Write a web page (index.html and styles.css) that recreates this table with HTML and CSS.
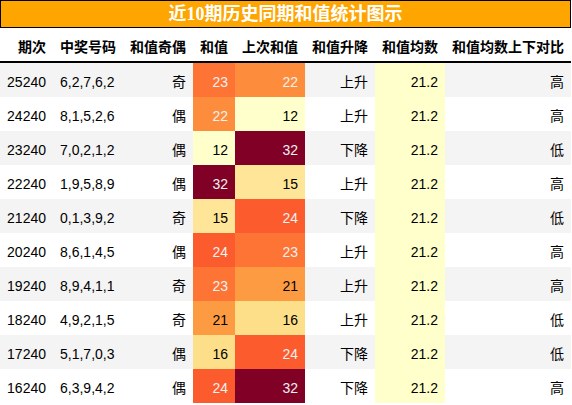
FILE: index.html
```html
<!DOCTYPE html>
<html lang="zh-CN">
<head>
<meta charset="utf-8">
<title>近10期历史同期和值统计图示</title>
<link rel="stylesheet" href="styles.css">
</head>
<body>
<div class="chart">
  <div class="title">近10期历史同期和值统计图示</div>
  <table class="stats">
    <colgroup>
      <col class="c-issue"><col class="c-nums"><col class="c-parity"><col class="c-sum">
      <col class="c-prev"><col class="c-trend"><col class="c-avg"><col class="c-cmp">
    </colgroup>
    <thead>
      <tr>
        <th>期次</th><th>中奖号码</th><th>和值奇偶</th><th>和值</th>
        <th>上次和值</th><th>和值升降</th><th>和值均数</th><th>和值均数上下对比</th>
      </tr>
    </thead>
    <tbody>
      <tr><td>25240</td><td class="left">6,2,7,6,2</td><td>奇</td><td class="v23">23</td><td class="v22">22</td><td>上升</td><td class="avg">21.2</td><td>高</td></tr>
      <tr><td>24240</td><td class="left">8,1,5,2,6</td><td>偶</td><td class="v22">22</td><td class="v12">12</td><td>上升</td><td class="avg">21.2</td><td>高</td></tr>
      <tr><td>23240</td><td class="left">7,0,2,1,2</td><td>偶</td><td class="v12">12</td><td class="v32">32</td><td>下降</td><td class="avg">21.2</td><td>低</td></tr>
      <tr><td>22240</td><td class="left">1,9,5,8,9</td><td>偶</td><td class="v32">32</td><td class="v15">15</td><td>上升</td><td class="avg">21.2</td><td>高</td></tr>
      <tr><td>21240</td><td class="left">0,1,3,9,2</td><td>奇</td><td class="v15">15</td><td class="v24">24</td><td>下降</td><td class="avg">21.2</td><td>低</td></tr>
      <tr><td>20240</td><td class="left">8,6,1,4,5</td><td>偶</td><td class="v24">24</td><td class="v23">23</td><td>上升</td><td class="avg">21.2</td><td>高</td></tr>
      <tr><td>19240</td><td class="left">8,9,4,1,1</td><td>奇</td><td class="v23">23</td><td class="v21">21</td><td>上升</td><td class="avg">21.2</td><td>高</td></tr>
      <tr><td>18240</td><td class="left">4,9,2,1,5</td><td>奇</td><td class="v21">21</td><td class="v16">16</td><td>上升</td><td class="avg">21.2</td><td>低</td></tr>
      <tr><td>17240</td><td class="left">5,1,7,0,3</td><td>偶</td><td class="v16">16</td><td class="v24">24</td><td>下降</td><td class="avg">21.2</td><td>低</td></tr>
      <tr><td>16240</td><td class="left">6,3,9,4,2</td><td>偶</td><td class="v24">24</td><td class="v32">32</td><td>下降</td><td class="avg">21.2</td><td>高</td></tr>
    </tbody>
  </table>
</div>
</body>
</html>
```

FILE: styles.css
```css
html, body {
  margin: 0;
  padding: 0;
  background: #ffffff;
}

.chart {
  width: 571px;
}

.title {
  box-sizing: border-box;
  height: 28px;
  border: 1px solid #000;
  background: #ffa500;
  color: #ffffff;
  font-family: "Liberation Serif", "Noto Sans CJK SC", serif;
  font-weight: bold;
  font-size: 18px;
  line-height: 26px;
  text-align: center;
}

.stats {
  width: 571px;
  table-layout: fixed;
  border-collapse: separate;
  border-spacing: 0;
  font-family: "Liberation Sans", "Noto Sans CJK SC", sans-serif;
  font-size: 14px;
  color: #000;
}

.c-issue { width: 53px; }
.c-nums { width: 70px; }
.c-parity { width: 70px; }
.c-sum { width: 42px; }
.c-prev { width: 70px; }
.c-trend { width: 70px; }
.c-avg { width: 70px; }
.c-cmp { width: 126px; }

.stats th {
  height: 35px;
  padding: 3px 7px 0;
  box-sizing: border-box;
  text-align: right;
  font-family: "Noto Sans CJK SC", "Liberation Sans", sans-serif;
  font-weight: bold;
  font-size: 14px;
  line-height: 20px;
  white-space: nowrap;
  border-bottom: 2px solid #000;
  background: #fff;
}

.stats td {
  height: 34px;
  padding: 3px 7px 0;
  box-sizing: border-box;
  text-align: right;
  white-space: nowrap;
  line-height: 20px;
}

.stats td.left {
  text-align: left;
}

.stats tbody tr:nth-child(odd) {
  background: #f4f4f4;
}

.stats tbody tr:nth-child(even) {
  background: #ffffff;
}

.avg { background: #ffffcc; color: #000; }
.v12 { background: #ffffcc; color: #000; }
.v15 { background: #fee597; color: #000; }
.v16 { background: #fedf89; color: #000; }
.v21 { background: #fd9b43; color: #000; }
.v22 { background: #fd8d3c; color: #f1f1f1; }
.v23 { background: #fd7435; color: #f1f1f1; }
.v24 { background: #fc5b2e; color: #f1f1f1; }
.v32 { background: #800026; color: #f1f1f1; }
```
